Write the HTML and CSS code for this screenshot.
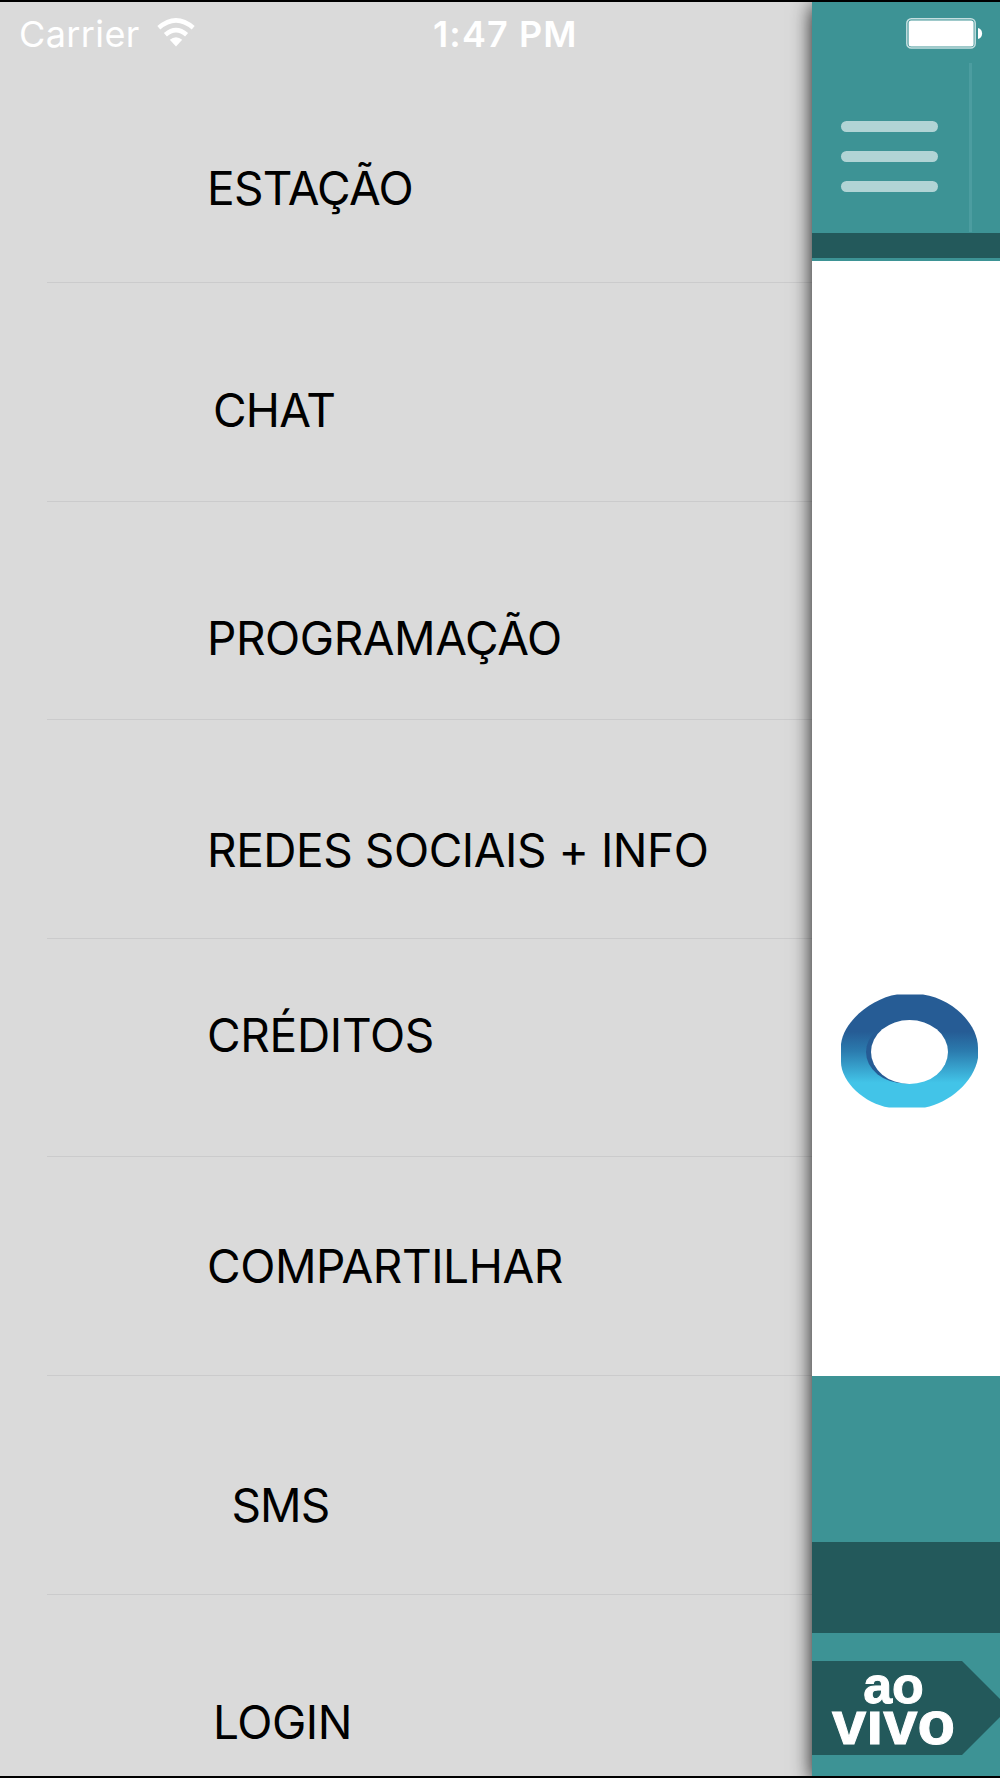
FILE: index.html
```html
<!DOCTYPE html>
<html lang="pt">
<head>
  <meta charset="UTF-8" />
  <meta name="viewport" content="width=device-width, initial-scale=1" />
  <title>Menu</title>
  <link rel="stylesheet" href="styles.css">
</head>
<body>
  <div class="screen">
    <!-- Side menu -->
    <nav class="menu">
      <a class="item estacao"><span>ESTAÇÃO</span></a>
      <a class="item chat"><span>CHAT</span></a>
      <a class="item programacao"><span>PROGRAMAÇÃO</span></a>
      <a class="item redes"><span>REDES SOCIAIS + INFO</span></a>
      <a class="item creditos"><span>CRÉDITOS</span></a>
      <a class="item compartilhar"><span>COMPARTILHAR</span></a>
      <a class="item sms"><span>SMS</span></a>
      <a class="item login"><span>LOGIN</span></a>
    </nav>

    <!-- Main view, pushed to the right -->
    <main class="player">
      <header class="topbar">
        <div class="hamburger">
          <i></i>
          <i></i>
          <i></i>
        </div>
        <div class="divider"></div>
      </header>
      <div class="strip"></div>
      <section class="logo">
        <svg width="137" height="114" viewBox="0 0 137 114">
          <defs>
            <linearGradient id="ring" x1="0" y1="0" x2="0" y2="1">
              <stop offset="0" stop-color="#265c95" />
              <stop offset="0.33" stop-color="#265c95" />
              <stop offset="0.5" stop-color="#2b7bae" />
              <stop offset="0.78" stop-color="#42c4e8" />
              <stop offset="1" stop-color="#42c4e8" />
            </linearGradient>
          </defs>
          <path fill="url(#ring)" d="M56 0.5H82C112 5 137 30 137 54V64C133 88 108 109 84 113.5H48C24 110 0 88 0 68V50C3 26 32 4 56 0.5Z" />
          <ellipse cx="64" cy="58" rx="39" ry="31.5" fill="#265c95" />
          <ellipse cx="68.5" cy="58" rx="38.5" ry="32" fill="#fff" />
        </svg>
      </section>
      <div class="controls"></div>
      <div class="band"></div>
      <footer class="live">
        <div class="live-tag">
          <span class="ao">ao</span>
          <span class="vivo">vivo</span>
        </div>
      </footer>
    </main>

    <!-- Status bar -->
    <div class="status">
      <span class="carrier">Carrier</span>
      <svg class="wifi" width="38" height="29" viewBox="0 0 38 29">
        <path fill="#fff" d="M19 28.5L12.8 21.8Q19 16.6 25.2 21.8Z" />
        <path fill="none" stroke="#fff" stroke-width="4.6" d="M8.4 16.8Q19 7.6 29.6 16.8" />
        <path fill="none" stroke="#fff" stroke-width="4.6" d="M1.8 9.8Q19 -5 36.2 9.8" />
      </svg>
      <span class="time">1:47 PM</span>
      <svg class="battery" width="78" height="31" viewBox="0 0 78 31">
        <rect x="0.8" y="0.8" width="68.4" height="29.2" rx="4.5" fill="none" stroke="#c5dfe0" stroke-width="1.5" />
        <rect x="2.6" y="2.4" width="65" height="26" rx="2.5" fill="#fff" />
        <path fill="#fff" d="M72 10C77.5 11 77.5 20 72 21Z" />
      </svg>
    </div>
  </div>
</body>
</html>
```
FILE: styles.css
```css
:root {
  --teal: #3d9395;
  --teal-dark: #23595b;
  --grey: #dadada;
  --line: #cbcbcc;
}

* {
  box-sizing: border-box;
}

body {
  margin: 0;
  background: #000;
  font-family: Inter, "Liberation Sans", sans-serif;
}

.screen {
  position: relative;
  display: flex;
  width: 1000px;
  height: 1778px;
  border-top: 2px solid #000;
  border-bottom: 2px solid #000;
  overflow: hidden;
}

/* Side menu */
.menu {
  width: 812px;
  padding-top: 62.2px;
  background: var(--grey);
  overflow: hidden;
}

.item {
  display: flex;
  height: 218.67px;
  margin-left: 47px;
  padding-left: 160px;
  border-bottom: 1px solid var(--line);
  color: #000;
  font-size: 46px;
  line-height: 56px;
  letter-spacing: -0.45px;
  white-space: nowrap;
}

.estacao { padding-top: 96px; letter-spacing: -0.75px; }
.chat { padding-top: 99px; padding-left: 166px; letter-spacing: -0.8px; }
.programacao { padding-top: 108.5px; }
.redes { padding-top: 102.3px; }
.creditos { padding-top: 68.3px; letter-spacing: -0.3px; }
.compartilhar { padding-top: 80.3px; }
.sms { padding-top: 100.5px; padding-left: 184.5px; letter-spacing: -0.9px; }
.login { padding-top: 99.5px; padding-left: 166px; }

/* Main view */
.player {
  position: relative;
  display: flex;
  flex-direction: column;
  width: 188px;
  background: var(--teal);
  box-shadow: 0 4px 19px rgba(0, 0, 0, 0.9);
}

.topbar {
  display: flex;
  height: 231px;
  padding: 61px 28px 0 29px;
}

.hamburger {
  display: flex;
  flex-direction: column;
  gap: 19.2px;
  width: 97px;
  padding-top: 57.5px;
}

.hamburger i {
  height: 11px;
  border-radius: 6px;
  background: #b1d4d5;
}

.divider {
  width: 3px;
  height: 169px;
  margin-left: 31px;
  background: #4c9da0;
}

.strip {
  height: 28px;
  background: var(--teal-dark);
  border-bottom: 3px solid var(--teal);
}

.logo {
  height: 1115px;
  padding: 733px 0 0 29px;
  background: #fff;
}

.controls {
  height: 166px;
}

.band {
  height: 91px;
  background: var(--teal-dark);
}

.live {
  padding-top: 28px;
  overflow: hidden;
}

.live-tag {
  display: flex;
  flex-direction: column;
  align-items: center;
  width: 197px;
  height: 94px;
  padding-right: 34px;
  background: var(--teal-dark);
  clip-path: polygon(0 0, 150px 0, 197px 47px, 150px 94px, 0 94px);
  color: #fff;
  font-family: "Liberation Sans", Arial, sans-serif;
  font-weight: 700;
  -webkit-text-stroke: 1px #fff;
}

.ao {
  height: 46px;
  font-size: 52px;
  line-height: 49px;
}

/* the dot of the i is cut away, it would run into the line above */
.vivo {
  height: 42px;
  font-size: 61.5px;
  line-height: 32px;
  clip-path: inset(3px -4px -4px -4px);
}

/* Status bar */
.status {
  position: absolute;
  top: 0;
  left: 0;
  display: flex;
  width: 1000px;
  padding: 7px 0 0 19px;
  color: #fff;
  font-size: 36px;
  line-height: 50px;
  white-space: nowrap;
}

.carrier {
  width: 138px;
  letter-spacing: 0.4px;
}

.wifi {
  margin-top: 9px;
}

.time {
  width: 473px;
  margin-left: 238px;
  font-weight: 600;
  letter-spacing: 1.1px;
}

.battery {
  margin-top: 9px;
}
```
